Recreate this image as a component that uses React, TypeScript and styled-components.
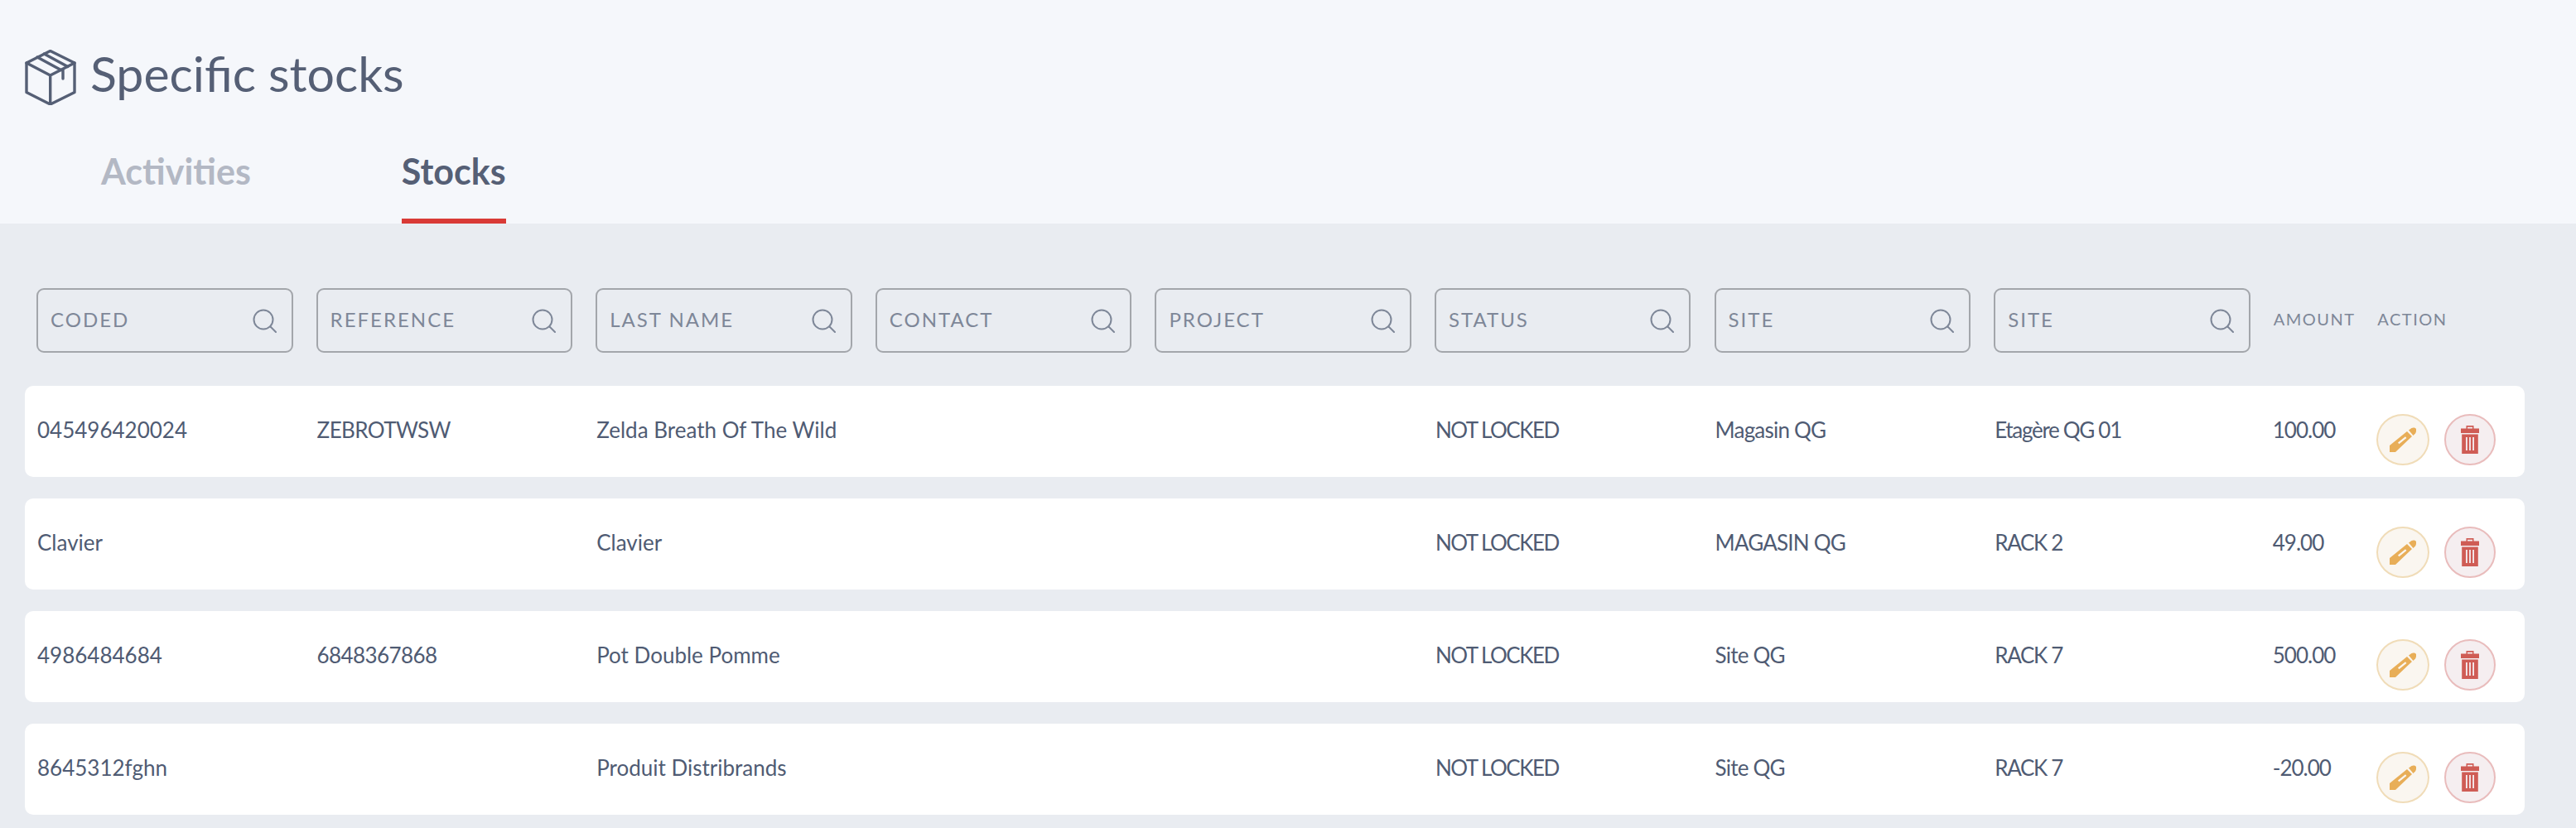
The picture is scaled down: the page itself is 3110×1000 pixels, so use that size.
import React from "react";
import styled, { createGlobalStyle } from "styled-components";

const Global = createGlobalStyle`
  html, body { margin: 0; padding: 0; background: #e9ecf1; }
  body { font-family: Lato, Roboto, "Liberation Sans", sans-serif; color: #525d74; }
`;

const Page = styled.div`
  width: 3110px;
  height: 1000px;
  overflow: hidden;
  background: #e9ecf1;
`;

const Header = styled.header`
  height: 270px;
  background: #f5f7fb;
  padding: 60px 0 0 30px;
  box-sizing: border-box;
  display: flex;
  flex-direction: column;
`;

const TitleRow = styled.div`
  display: flex;
  align-items: center;
  gap: 17px;
  height: 67px;
`;

const Title = styled.h1`
  margin: -10px 0 0;
  font-size: 59px;
  line-height: 67px;
  font-weight: 400;
  color: #555f75;
`;

const Tabs = styled.nav`
  display: flex;
  gap: 182px;
  padding-left: 92px;
  margin-top: auto;
`;

const Tab = styled.div<{ $active?: boolean }>`
  height: 87px;
  box-sizing: border-box;
  font-size: 43px;
  line-height: 48px;
  font-weight: 700;
  color: ${(p) => (p.$active ? "#555f75" : "#b3b8c4")};
  border-bottom: 6px solid ${(p) => (p.$active ? "#d93a36" : "transparent")};
`;

const Content = styled.main`
  padding: 78px 62px 0 30px;
`;

const Grid = styled.div`
  display: grid;
  grid-template-columns: repeat(8, 337.6px) 125.6px 1fr;
  align-items: center;
  padding-left: 14px;
`;

const FilterBar = styled(Grid)`
  height: 78px;
`;

const Filter = styled.label`
  width: 309.5px;
  height: 78px;
  box-sizing: border-box;
  border: 2px solid #a3a6ab;
  border-radius: 9px;
  display: flex;
  align-items: center;
  justify-content: space-between;
  padding: 0 18px 0 15px;
`;

const FilterLabel = styled.span`
  font-size: 24px;
  letter-spacing: 2px;
  margin-top: -4px;
  color: #7e8798;
`;

const SideHead = styled.span`
  font-size: 20px;
  letter-spacing: 1.5px;
  margin-top: -4px;
  color: #7e8798;
`;

const Rows = styled.div`
  margin-top: 40px;
  display: flex;
  flex-direction: column;
  gap: 26px;
`;

const Row = styled(Grid)`
  height: 110px;
  background: #fff;
  border-radius: 10px;
  padding-left: 15px;
`;

const Cell = styled.span<{ $tracking: number; $shift: number }>`
  font-size: 26px;
  margin: -4px 0 0 ${(p) => p.$shift}px;
  letter-spacing: ${(p) => p.$tracking}px;
  color: #4f5b73;
  white-space: nowrap;
`;

const Actions = styled.div`
  display: flex;
  gap: 18px;
  margin: 20px 0 0 -2px;
`;

const RoundButton = styled.button<{ $edge: string; $fill: string; $w: number }>`
  width: ${(p) => p.$w}px;
  height: 62px;
  padding: 0;
  border-radius: 50%;
  border: 2px solid ${(p) => p.$edge};
  background: ${(p) => p.$fill};
  display: flex;
  align-items: center;
  justify-content: center;
`;

const BoxIcon = () => (
  <svg width="62" height="67" viewBox="0 0 62 67" fill="none" stroke="#555f75" strokeWidth="3.4" strokeLinejoin="round" strokeLinecap="round">
    <path d="M30.7 1.5 60 16v35.5L30.7 66 2 51.5V16Z" />
    <path d="M2 16l28.7 15L60 16M30.7 31v35" />
    <path d="M15 9l28.5 15.5M23.3 5l28.5 15.5M46 24v11" />
  </svg>
);

const SearchIcon = () => (
  <svg width="29" height="29" viewBox="0 0 29 29" fill="none" stroke="#7e8798" strokeWidth="2">
    <circle cx="13" cy="13" r="11.5" />
    <path d="M21.5 21.5 28 28" strokeLinecap="round" />
  </svg>
);

const PencilIcon = () => (
  <svg width="32" height="30" viewBox="0 0 32 30">
    <path fill="#e8ae58" fillRule="evenodd" d="M0 22 21 5 27 11 7 30H0ZM10 18.5l1.4 1.8 9-7.2-1.4-1.8Z" />
    <path fill="#e8ae58" d="M23 3.5 26.5 1c2-1 5-.5 5.5 1 .5 1.5 0 4-1 5.5L28.5 10Z" />
  </svg>
);

const TrashIcon = () => (
  <svg width="22" height="34" viewBox="0 0 22 34">
    <path fill="#cf5c55" fillRule="evenodd" d="M0 3.5h6.5V0h9v3.5H22V9H0ZM8 3.5h6V1.8H8Z" />
    <path fill="#cf5c55" fillRule="evenodd" d="M1.2 10.5h19.6V34H1.2ZM6 14v16h1.8V14Zm4.1 0v16h1.8V14Zm4.1 0v16H16V14Z" />
  </svg>
);

const filters = ["CODED", "REFERENCE", "LAST NAME", "CONTACT", "PROJECT", "STATUS", "SITE", "SITE"];

const rows = [
  ["045496420024", "ZEBROTWSW", "Zelda Breath Of The Wild", "", "", "NOT LOCKED", "Magasin QG", "Etagère QG 01", "100.00"],
  ["Clavier", "", "Clavier", "", "", "NOT LOCKED", "MAGASIN QG", "RACK 2", "49.00"],
  ["4986484684", "6848367868", "Pot Double Pomme", "", "", "NOT LOCKED", "Site QG", "RACK 7", "500.00"],
  ["8645312fghn", "", "Produit Distribrands", "", "", "NOT LOCKED", "Site QG", "RACK 7", "-20.00"],
];

const tracking = [0, -0.6, 0, 0, 0, -1.5, -0.8, -1.3, -1];

export default function App() {
  return (
    <Page>
      <Global />
      <Header>
        <TitleRow>
          <BoxIcon />
          <Title>Specific stocks</Title>
        </TitleRow>
        <Tabs>
          <Tab>Activities</Tab>
          <Tab $active>Stocks</Tab>
        </Tabs>
      </Header>
      <Content>
        <FilterBar>
          {filters.map((f, i) => (
            <Filter key={i}>
              <FilterLabel>{f}</FilterLabel>
              <SearchIcon />
            </Filter>
          ))}
          <SideHead>AMOUNT</SideHead>
          <SideHead>ACTION</SideHead>
        </FilterBar>
        <Rows>
          {rows.map((r, i) => (
            <Row key={i}>
              {r.map((c, j) => (
                <Cell key={j} $tracking={tracking[j]} $shift={j === 8 ? -2 : 0}>
                  {c}
                </Cell>
              ))}
              <Actions>
                <RoundButton $w={64} $edge="#f0dcb8" $fill="#faf6f0" aria-label="Edit">
                  <PencilIcon />
                </RoundButton>
                <RoundButton $w={62} $edge="#e9bcbc" $fill="#f5eef0" aria-label="Delete">
                  <TrashIcon />
                </RoundButton>
              </Actions>
            </Row>
          ))}
        </Rows>
      </Content>
    </Page>
  );
}
